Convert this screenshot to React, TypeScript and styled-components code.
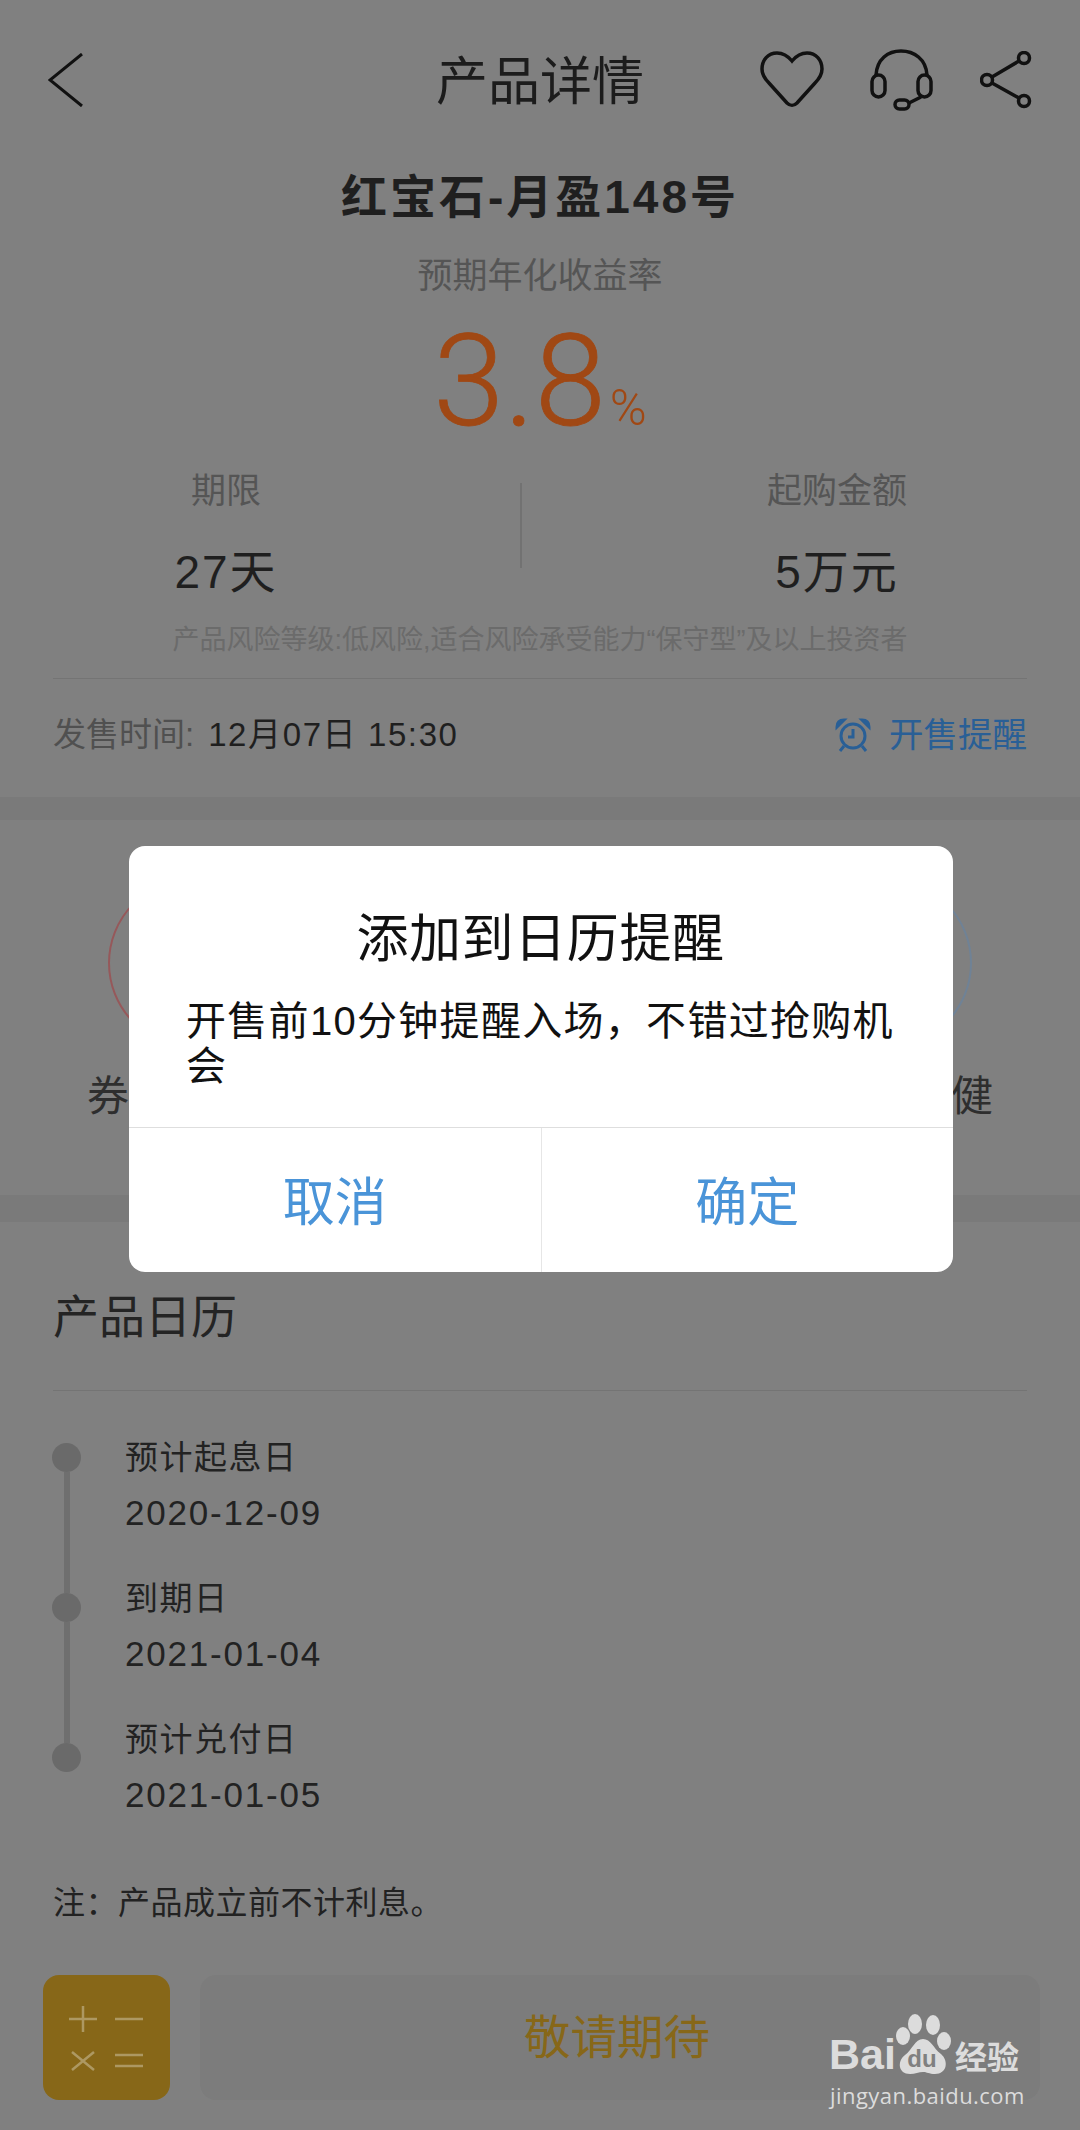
import styled, { createGlobalStyle } from "styled-components";

const Global = createGlobalStyle`
    html, body {
        margin: 0;
        padding: 0;
        background: #808080;
    }
    * { box-sizing: border-box; }
    body {
        font-family: "Liberation Sans", "Noto Sans CJK SC", sans-serif;
    }
`;

const Page = styled.div`
    position: relative;
    width: 1080px;
    height: 2130px;
    overflow: hidden;
    background: #808080;
    display: flex;
    flex-direction: column;
`;

const Summary = styled.section`
    height: 797px;
`;

const Band = styled.div<{ $h: number }>`
    height: ${(p) => p.$h}px;
    background: #7a7a7a;
`;

const Header = styled.header`
    height: 160px;
    display: grid;
    grid-template-columns: 1fr auto 1fr;
    align-items: center;
    padding: 0 48px;
`;

const Title = styled.h1`
    margin: 4px 0 0;
    font-size: 52px;
    line-height: 60px;
    font-weight: 400;
    color: #1c1c1c;
`;

const Tools = styled.div`
    display: flex;
    justify-content: flex-end;
    align-items: center;
    gap: 46px;
`;

const Name = styled.h2`
    margin: 7px 0 0;
    text-align: center;
    font-size: 46px;
    letter-spacing: 3px;
    line-height: 60px;
    font-weight: 700;
    color: #1f1f1f;
`;

const RateLabel = styled.div`
    margin-top: 24px;
    text-align: center;
    font-size: 35px;
    line-height: 50px;
    color: #555;
`;

const Rate = styled.div`
    margin-top: 17px;
    height: 120px;
    display: flex;
    justify-content: center;
    align-items: baseline;
    color: #a04814;
    -webkit-text-stroke: 0.8px #a04814;
    font-family: Roboto, "Liberation Sans", sans-serif;
    font-weight: 300;
    font-size: 128px;
    line-height: 126px;
`;

const Percent = styled.span`
    font-size: 50px;
    line-height: 50px;
    margin-left: 4px;
    -webkit-text-stroke: 0;
`;

const Stats = styled.div`
    display: flex;
    margin-top: 32px;
    padding-left: 76px;
    align-items: flex-start;
`;

const Stat = styled.div`
    width: 300px;
    text-align: center;
`;

const StatLabel = styled.div`
    font-size: 35px;
    line-height: 42px;
    color: #555;
`;

const StatValue = styled.div`
    margin-top: 35px;
    font-size: 46px;
    letter-spacing: 2px;
    line-height: 50px;
    color: #1f1f1f;
`;

const StatDivider = styled.div`
    width: 2px;
    height: 85px;
    margin: 13px 165px 0 144px;
    background: #727272;
`;

const Risk = styled.div`
    margin-top: 26px;
    text-align: center;
    font-size: 27px;
    line-height: 34px;
    color: #6b6b6b;
`;

const Rule = styled.div<{ $gap: number }>`
    height: 1px;
    margin: ${(p) => p.$gap}px 53px 0;
    background: #747474;
`;

const SaleRow = styled.div`
    display: flex;
    justify-content: space-between;
    align-items: center;
    margin-top: 36px;
    padding: 0 53px;
    height: 40px;
`;

const SaleTime = styled.div`
    display: flex;
    align-items: center;
    gap: 14px;
    font-size: 33px;
    line-height: 40px;
    color: #1f1f1f;
`;

const SaleLabel = styled.span`
    color: #505050;
`;

const SaleValue = styled.span`
    letter-spacing: 1.6px;
`;

const Remind = styled.div`
    display: flex;
    align-items: center;
    gap: 18px;
    font-size: 34.5px;
    line-height: 40px;
    color: #295f96;
`;

const Perks = styled.section`
    height: 375px;
    padding: 58px 87px 0;
    display: flex;
    justify-content: space-between;
`;

const Perk = styled.div`
    width: 212px;
    display: flex;
    flex-direction: column;
    align-items: center;
    gap: 24px;
`;

const PerkCircle = styled.div<{ $color: string }>`
    width: 170px;
    height: 170px;
    border-radius: 50%;
    border: 2px solid ${(p) => p.$color};
`;

const PerkLabel = styled.div<{ $end?: boolean }>`
    width: 100%;
    text-align: ${(p) => (p.$end ? "right" : "left")};
    font-size: 42px;
    line-height: 50px;
    color: #2e2e2e;
`;

const Calendar = styled.section`
    flex: 1;
    padding-top: 65px;
    display: flex;
    flex-direction: column;
`;

const CalendarTitle = styled.h3`
    margin: 0;
    padding: 0 53px;
    font-size: 46px;
    line-height: 60px;
    font-weight: 400;
    color: #242424;
`;

const Timeline = styled.div`
    display: flex;
    margin-top: 45px;
    padding-left: 52px;
`;

const Rail = styled.div`
    width: 29px;
    margin: 7px 44px 0 0;
    display: flex;
    flex-direction: column;
    align-items: center;
`;

const RailDot = styled.div`
    width: 29px;
    height: 29px;
    flex: none;
    border-radius: 50%;
    background: #6a6a6a;
`;

const RailLine = styled.div`
    width: 6px;
    height: 121px;
    flex: none;
    background: #6f6f6f;
`;

const Dates = styled.div`
    display: flex;
    flex-direction: column;
`;

const DateItem = styled.div`
    margin-bottom: 42px;
    &:last-child {
        margin-bottom: 0;
    }
`;

const DateLabel = styled.div`
    font-size: 33px;
    letter-spacing: 1.5px;
    line-height: 44px;
    color: #222;
`;

const DateValue = styled.div`
    margin-top: 11px;
    font-size: 35px;
    letter-spacing: 1.8px;
    line-height: 44px;
    color: #222;
`;

const Note = styled.div`
    margin-top: 64px;
    padding: 0 53px;
    font-size: 32px;
    letter-spacing: 0.5px;
    line-height: 44px;
    color: #222;
`;

const Footer = styled.footer`
    margin-top: 50px;
    padding-left: 43px;
    display: flex;
    gap: 30px;
`;

const CalcButton = styled.div`
    width: 127px;
    height: 125px;
    border-radius: 16px;
    background: #876718;
    display: flex;
    align-items: center;
    justify-content: center;
`;

const WaitButton = styled.div`
    width: 840px;
    height: 125px;
    padding: 0 6px 8px 0;
    border-radius: 16px;
    background: #7c7c7c;
    display: flex;
    align-items: center;
    justify-content: center;
    font-size: 46.5px;
    color: #876718;
`;

const Dialog = styled.div`
    position: absolute;
    left: 129px;
    top: 846px;
    width: 824px;
    height: 426px;
    border-radius: 16px;
    background: #fff;
    display: flex;
    flex-direction: column;
`;

const DialogBody = styled.div`
    height: 282px;
    padding: 58px 50px 0 57px;
    border-bottom: 1px solid #dedede;
`;

const DialogTitle = styled.div`
    text-align: center;
    margin-left: -8px;
    font-size: 52px;
    letter-spacing: 0.6px;
    line-height: 70px;
    color: #111;
`;

const DialogText = styled.div`
    margin-top: 25px;
    font-size: 40px;
    letter-spacing: 1.3px;
    line-height: 45px;
    color: #111;
`;

const DialogActions = styled.div`
    flex: 1;
    display: flex;
`;

const DialogButton = styled.div`
    flex: 1;
    padding-bottom: 4px;
    display: flex;
    align-items: center;
    justify-content: center;
    font-size: 52px;
    color: #4a94d8;
    & + & {
        border-left: 1px solid #e6e6e6;
    }
`;

const Watermark = styled.div`
    position: absolute;
    left: 826px;
    top: 2014px;
    width: 200px;
    color: #dcdcdc;
`;

const MarkTop = styled.div`
    display: flex;
    align-items: flex-end;
    height: 62px;
`;

const MarkBai = styled.span`
    font-size: 43px;
    line-height: 44px;
    font-weight: 700;
    margin-left: 3px;
    width: 66px;
`;

const MarkCn = styled.span`
    font-size: 32px;
    line-height: 36px;
    font-weight: 700;
    margin-left: 2px;
`;

const MarkUrl = styled.div`
    margin: 4px 0 0 4px;
    font-family: "Open Sans", sans-serif;
    font-size: 22px;
    letter-spacing: 0.45px;
    line-height: 30px;
    white-space: nowrap;
`;

const BackIcon = () => (
    <svg width="36" height="54" viewBox="0 0 36 54" fill="none" stroke="#111" strokeWidth="3">
        <path d="M34 1 L2 27 L34 53" />
    </svg>
);

const HeartIcon = () => (
    <svg width="64" height="58" viewBox="0 0 64 58" fill="none" stroke="#111" strokeWidth="3.5">
        <path d="M32 10 C27 4 22 2 17 2 C8 2 2 9 2 18 C2 24 5 28 9 32 L27 52 C30 55 34 55 37 52 L55 32 C59 28 62 24 62 18 C62 9 56 2 47 2 C42 2 37 4 32 10 Z" />
    </svg>
);

const HeadsetIcon = () => (
    <svg width="64" height="62" viewBox="0 0 64 62" fill="none" stroke="#111" strokeWidth="3.5">
        <path d="M6 26 C7 10 18 2 31 2 C44 2 56 10 57 26" />
        <rect x="2" y="26" width="13" height="22" rx="6.5" />
        <rect x="48" y="26" width="13" height="22" rx="6.5" />
        <rect x="25" y="51" width="14" height="9" rx="4.5" />
        <path d="M39 54 L51 48" />
    </svg>
);

const ShareIcon = () => (
    <svg width="52" height="58" viewBox="0 0 52 58" fill="none" stroke="#111" strokeWidth="3.5">
        <circle cx="7" cy="29" r="5.5" />
        <circle cx="44" cy="7" r="5.5" />
        <circle cx="44" cy="50" r="5.5" />
        <path d="M12 26 L39 10 M12 32 L39 47" />
    </svg>
);

const AlarmIcon = () => (
    <svg width="36" height="34" viewBox="0 0 36 34" fill="none" stroke="#295f96" strokeWidth="3">
        <circle cx="18" cy="18" r="12" />
        <path d="M18 11 L18 19 L13 19" />
        <path d="M2 9 C2 4 5 2 9 2 Z M34 9 C34 4 31 2 27 2 Z" fill="#295f96" />
        <path d="M9 28 L5 33 M27 28 L31 33" />
    </svg>
);

const CalcIcon = () => (
    <svg width="76" height="68" viewBox="0 0 76 68" fill="none" stroke="#ad9862" strokeWidth="2.5">
        <path d="M14 2 L14 28 M0 15 L28 15" />
        <path d="M46 15 L74 15" />
        <path d="M3 48 L25 66 M25 48 L3 66" />
        <path d="M46 51 L74 51 M46 62 L74 62" />
    </svg>
);

const PawIcon = () => (
    <svg width="58" height="62" viewBox="0 0 58 62" fill="#dcdcdc">
        <ellipse cx="8" cy="22" rx="7" ry="9" />
        <ellipse cx="20" cy="10" rx="7" ry="10" />
        <ellipse cx="38" cy="11" rx="7" ry="10" />
        <ellipse cx="49" cy="27" rx="7" ry="9" />
        <path d="M28 25 C36 25 38 34 46 40 C54 47 52 60 40 60 C34 60 32 58 28 58 C24 58 20 60 15 60 C3 60 2 47 10 41 C17 36 20 25 28 25 Z" />
        <text x="27" y="53" textAnchor="middle" fontFamily="Liberation Sans" fontWeight="700" fontSize="24" fill="#808080">du</text>
    </svg>
);

const dates = [
    { label: "预计起息日", value: "2020-12-09" },
    { label: "到期日", value: "2021-01-04" },
    { label: "预计兑付日", value: "2021-01-05" },
];

function App() {
    return (
        <Page>
            <Global />
            <Summary>
                <Header>
                    <BackIcon />
                    <Title>产品详情</Title>
                    <Tools>
                        <HeartIcon />
                        <HeadsetIcon />
                        <ShareIcon />
                    </Tools>
                </Header>
                <Name>红宝石-月盈148号</Name>
                <RateLabel>预期年化收益率</RateLabel>
                <Rate>
                    3.8<Percent>%</Percent>
                </Rate>
                <Stats>
                    <Stat>
                        <StatLabel>期限</StatLabel>
                        <StatValue>27天</StatValue>
                    </Stat>
                    <StatDivider />
                    <Stat>
                        <StatLabel>起购金额</StatLabel>
                        <StatValue>5万元</StatValue>
                    </Stat>
                </Stats>
                <Risk>产品风险等级:低风险,适合风险承受能力“保守型”及以上投资者</Risk>
                <Rule $gap={21} />
                <SaleRow>
                    <SaleTime>
                        <SaleLabel>发售时间:</SaleLabel>
                        <SaleValue>12月07日 15:30</SaleValue>
                    </SaleTime>
                    <Remind>
                        <AlarmIcon />
                        开售提醒
                    </Remind>
                </SaleRow>
            </Summary>
            <Band $h={23} />
            <Perks>
                <Perk>
                    <PerkCircle $color="#96585a" />
                    <PerkLabel>券</PerkLabel>
                </Perk>
                <Perk>
                    <PerkCircle $color="#6f8296" />
                    <PerkLabel $end>健</PerkLabel>
                </Perk>
            </Perks>
            <Band $h={27} />
            <Calendar>
                <CalendarTitle>产品日历</CalendarTitle>
                <Rule $gap={43} />
                <Timeline>
                    <Rail>
                        <RailDot />
                        <RailLine />
                        <RailDot />
                        <RailLine />
                        <RailDot />
                    </Rail>
                    <Dates>
                        {dates.map((item) => (
                            <DateItem key={item.value}>
                                <DateLabel>{item.label}</DateLabel>
                                <DateValue>{item.value}</DateValue>
                            </DateItem>
                        ))}
                    </Dates>
                </Timeline>
                <Note>注：产品成立前不计利息。</Note>
                <Footer>
                    <CalcButton>
                        <CalcIcon />
                    </CalcButton>
                    <WaitButton>敬请期待</WaitButton>
                </Footer>
            </Calendar>
            <Dialog>
                <DialogBody>
                    <DialogTitle>添加到日历提醒</DialogTitle>
                    <DialogText>开售前10分钟提醒入场，不错过抢购机会</DialogText>
                </DialogBody>
                <DialogActions>
                    <DialogButton>取消</DialogButton>
                    <DialogButton>确定</DialogButton>
                </DialogActions>
            </Dialog>
            <Watermark>
                <MarkTop>
                    <MarkBai>Bai</MarkBai>
                    <PawIcon />
                    <MarkCn>经验</MarkCn>
                </MarkTop>
                <MarkUrl>jingyan.baidu.com</MarkUrl>
            </Watermark>
        </Page>
    );
}

export default App;
